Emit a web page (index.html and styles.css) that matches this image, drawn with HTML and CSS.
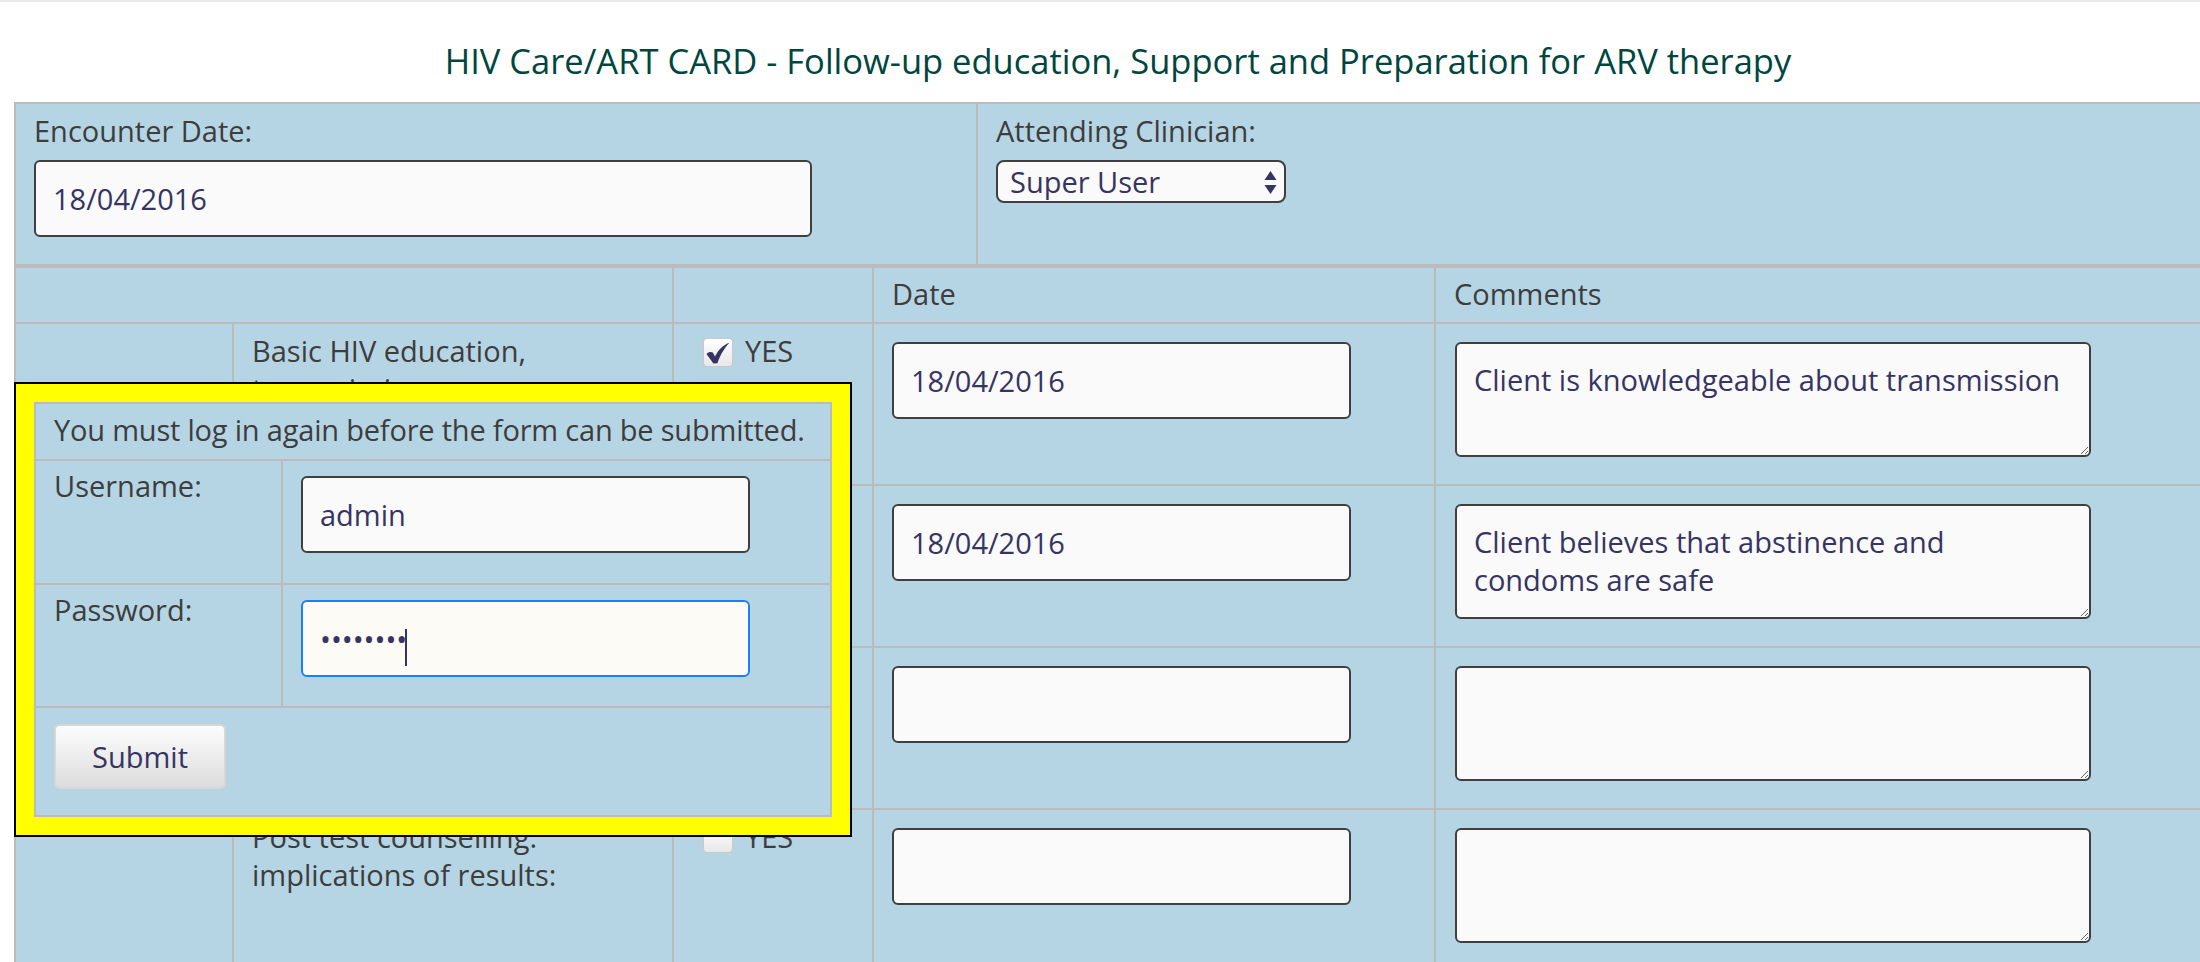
FILE: index.html
```html
<!DOCTYPE html>
<html lang="en">
<head>
<meta charset="utf-8">
<title>HIV Care/ART CARD</title>
<link rel="stylesheet" href="styles.css">
</head>
<body>
<div class="topbar"></div>
<div class="page">
  <h1 class="title">HIV Care/ART CARD - Follow-up education, Support and Preparation for ARV therapy</h1>

  <div class="head-grid">
    <div class="cell">
      <label class="lbl">Encounter Date:</label>
      <input class="field enc-date" type="text" value="18/04/2016">
    </div>
    <div class="cell">
      <label class="lbl">Attending Clinician:</label>
      <span class="select-wrap">
        <select class="select"><option>Super User</option></select>
        <svg class="select-arrows" width="13" height="23" viewBox="0 0 13 23" aria-hidden="true">
          <polygon points="6.5,0 12.5,9 0.5,9" fill="#363463"/>
          <polygon points="0.5,14 12.5,14 6.5,23" fill="#363463"/>
        </svg>
      </span>
    </div>
  </div>

  <div class="grid">
    <div class="cell hdr span2"></div>
    <div class="cell hdr"></div>
    <div class="cell hdr">Date</div>
    <div class="cell hdr">Comments</div>

    <div class="cell"></div>
    <div class="cell">Basic HIV education, transmission:</div>
    <div class="cell">
      <label class="opt"><span class="cb"><svg class="tick" width="24" height="22" viewBox="0 0 24 22" aria-hidden="true"><path d="M0.5 12 C2.5 10 5 9.5 6.8 10.6 L9 14.6 C12 8.6 16 3.8 23.5 0.5 C19 5.6 14.4 12.2 11.4 21.2 L7.4 21.6 Z" fill="#363463"/></svg></span>YES</label>
    </div>
    <div class="cell"><input class="field date" type="text" value="18/04/2016"></div>
    <div class="cell"><textarea class="note">Client is knowledgeable about transmission</textarea></div>

    <div class="cell"></div>
    <div class="cell">Prevention: abstinence, faithfulness, condoms:</div>
    <div class="cell">
      <label class="opt"><span class="cb"><svg class="tick" width="24" height="22" viewBox="0 0 24 22" aria-hidden="true"><path d="M0.5 12 C2.5 10 5 9.5 6.8 10.6 L9 14.6 C12 8.6 16 3.8 23.5 0.5 C19 5.6 14.4 12.2 11.4 21.2 L7.4 21.6 Z" fill="#363463"/></svg></span>YES</label>
    </div>
    <div class="cell"><input class="field date" type="text" value="18/04/2016"></div>
    <div class="cell"><textarea class="note">Client believes that abstinence and
condoms are safe</textarea></div>

    <div class="cell"></div>
    <div class="cell">Disclosure and partner testing:</div>
    <div class="cell">
      <label class="opt"><span class="cb"></span>YES</label>
    </div>
    <div class="cell"><input class="field date" type="text" value=""></div>
    <div class="cell"><textarea class="note"></textarea></div>

    <div class="cell"></div>
    <div class="cell">Post test counselling: implications of results:</div>
    <div class="cell">
      <label class="opt"><span class="cb"></span>YES</label>
    </div>
    <div class="cell"><input class="field date" type="text" value=""></div>
    <div class="cell"><textarea class="note"></textarea></div>
  </div>

  <div class="dialog">
    <div class="login">
      <div class="cell msg span2">You must log in again before the form can be submitted.</div>
      <div class="cell">Username:</div>
      <div class="cell"><input class="field user" type="text" value="admin"></div>
      <div class="cell">Password:</div>
      <div class="cell">
        <span class="pw-wrap">
          <input class="field user pw" type="password" value="admin123">
          <span class="caret"></span>
        </span>
      </div>
      <div class="cell span2"><button class="btn" type="button">Submit</button></div>
    </div>
  </div>
</div>
</body>
</html>
```

FILE: styles.css
```css
html, body {
  margin: 0;
  padding: 0;
  overflow: hidden;
  background: #ffffff;
}

body {
  font-family: "Open Sans", "Noto Sans", sans-serif;
  font-size: 29px;
  line-height: 38px;
  color: #3d3d3d;
}

.topbar {
  height: 2px;
  background: #e9e9e9;
}

.page {
  position: relative;
  display: flow-root;
  width: 2208px;
  margin-left: 14px;
}

.title {
  margin: 35px 0 17px;
  font-size: 34.5px;
  font-weight: normal;
  line-height: 48px;
  text-align: center;
  color: #00463f;
}

.head-grid {
  display: grid;
  grid-template-columns: 960px 1fr;
  grid-template-rows: 160px;
  gap: 2px;
  padding: 2px;
  background: #bbbbbb;
}

.grid {
  display: grid;
  grid-template-columns: 216px 438px 198px 560px 1fr;
  grid-template-rows: 54px repeat(4, 160px);
  gap: 2px;
  padding: 2px;
  background: #bbbbbb;
}

.cell {
  background: #b6d5e4;
  padding: 8px 18px;
  min-width: 0;
}

.hdr {
  padding-top: 7px;
}

.span2 {
  grid-column: span 2;
}

.lbl {
  display: block;
}

.field {
  display: block;
  box-sizing: border-box;
  height: 77px;
  margin: 10px 0 0;
  padding: 0 17px;
  border: 2px solid #3f3f3f;
  border-radius: 6px;
  background: #fafafa;
  color: #363463;
  font: inherit;
  outline: none;
}

.enc-date {
  width: 778px;
}

.date {
  width: 459px;
}

.note {
  display: block;
  box-sizing: border-box;
  width: 636px;
  height: 115px;
  margin: 10px 0 0 1px;
  padding: 17px;
  border: 2px solid #3f3f3f;
  border-radius: 6px;
  background: #fafafa;
  color: #363463;
  font: inherit;
  line-height: 38px;
  outline: none;
}

.select-wrap {
  position: relative;
  display: block;
  width: 290px;
  margin-top: 10px;
}

.select {
  display: block;
  box-sizing: border-box;
  width: 290px;
  height: 43px;
  padding: 0 12px;
  border: 2px solid #3f3f3f;
  border-radius: 8px;
  background: #fafafa;
  color: #363463;
  font: inherit;
  -webkit-appearance: none;
  appearance: none;
  outline: none;
}

.select-arrows {
  position: absolute;
  right: 9px;
  top: 11px;
  pointer-events: none;
}

.opt {
  display: flex;
  align-items: center;
  gap: 12px;
  height: 38px;
}

.cb {
  display: flex;
  align-items: center;
  justify-content: center;
  box-sizing: border-box;
  width: 30px;
  height: 29px;
  margin: 3px 0 0 11px;
  border: 1px solid #c9c9c9;
  border-radius: 4px;
  background: linear-gradient(#ffffff, #e8e8e8);
}

.tick {
  display: block;
  margin-top: 1px;
}

.dialog {
  position: absolute;
  left: 0;
  top: 380px;
  box-sizing: border-box;
  width: 838px;
  padding: 18px;
  border: 2px solid #000000;
  background: #ffff00;
}

.login {
  display: grid;
  grid-template-columns: 245px 1fr;
  grid-template-rows: 55px 122px 121px 107px;
  gap: 2px;
  padding: 2px;
  background: #bbbbbb;
}

.login .cell {
  padding: 6px 18px;
}

.login .msg {
  padding: 7px 0 0 18px;
  white-space: nowrap;
  letter-spacing: -0.2px;
}

.user {
  width: 449px;
  margin-top: 9px;
}

.pw-wrap {
  position: relative;
  display: block;
  width: 449px;
}

.pw {
  border-color: #1a7ffb;
  background: #fcfbf6;
}

.caret {
  position: absolute;
  left: 104px;
  top: 29px;
  width: 2px;
  height: 37px;
  background: #363463;
}

.btn {
  display: block;
  box-sizing: border-box;
  width: 172px;
  height: 65px;
  margin-top: 10px;
  border: 2px solid #d7d7d7;
  border-radius: 6px;
  background: linear-gradient(#fdfdfd, #dcdcdc);
  color: #363463;
  font: inherit;
  padding: 0;
}
```
